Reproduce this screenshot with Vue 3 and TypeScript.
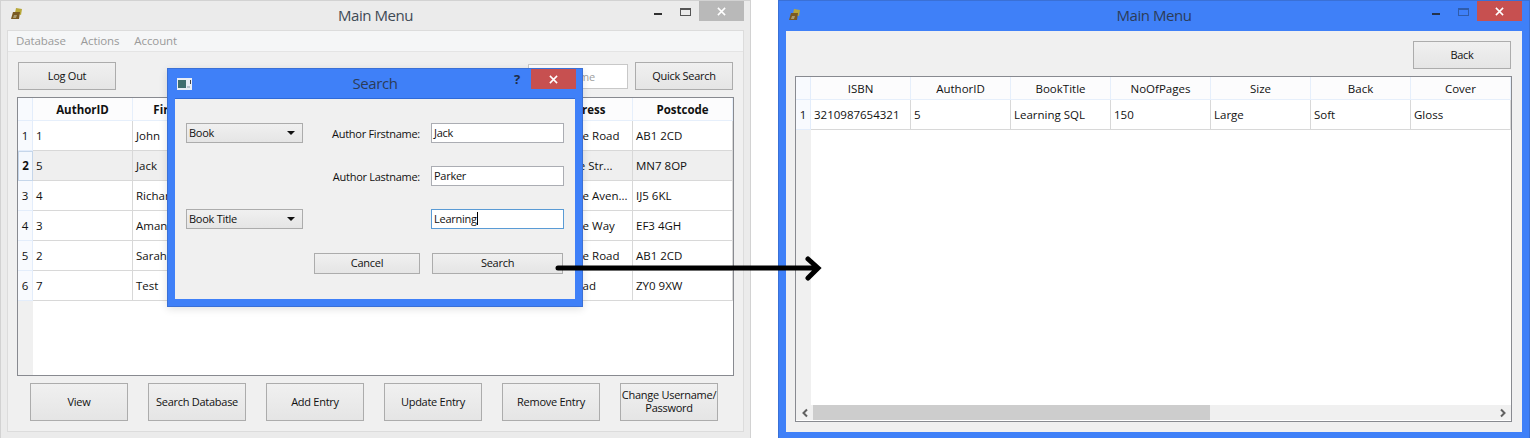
<script setup lang="ts">
interface Sheet {
  heads: string[]
  rows: string[][]
}
const mainSheet: Sheet = {
  heads: ['AuthorID', 'Firstname', '', '', '', 'Address', 'Postcode'],
  rows: [
    ['1', 'John', '', '', '', '123 Some Road', 'AB1 2CD'],
    ['5', 'Jack', '', '', '', '45 Maple Str...', 'MN7 8OP'],
    ['4', 'Richard', '', '', '', '789 Some Aven...', 'IJ5 6KL'],
    ['3', 'Amanda', '', '', '', '123 Some Way', 'EF3 4GH'],
    ['2', 'Sarah', '', '', '', '123 Some Road', 'AB1 2CD'],
    ['7', 'Test', '', '', '', '1 Elm Road', 'ZY0 9XW'],
  ],
}
const resultSheet: Sheet = {
  heads: ['ISBN', 'AuthorID', 'BookTitle', 'NoOfPages', 'Size', 'Back', 'Cover'],
  rows: [['3210987654321', '5', 'Learning SQL', '150', 'Large', 'Soft', 'Gloss']],
}
const actions = ['View', 'Search Database', 'Add Entry', 'Update Entry', 'Remove Entry', 'Change Username/\nPassword']
const menus = ['Database', 'Actions', 'Account']
</script>

<template>
  <div class="desk">
    <!-- Main window -->
    <section class="win win-main">
      <header class="bar">
        <svg class="app-icon" viewBox="0 0 14 14" width="14" height="14">
          <path d="M6 1 L12 2 L11 8 L5 6 Z" fill="#b8a83a" />
          <path d="M3 5 L10 5 L9 12 L1 12 Z" fill="#7a5a22" />
          <path d="M4 8 L7 8 L6 11 L3 11 Z" fill="#a89a70" />
        </svg>
        <h1 class="title">Main Menu</h1>
        <div class="ctrls">
          <i class="min"></i><i class="max"></i>
          <span class="close idle"><svg viewBox="0 0 10 10" width="9" height="9"><path d="M1 1 L9 9 M9 1 L1 9" stroke="#fff" stroke-width="1.7" /></svg></span>
        </div>
      </header>
      <div class="client">
        <nav class="menu"><span v-for="m in menus" :key="m">{{ m }}</span></nav>
        <div class="body">
          <div class="toolbar">
            <button class="btn tool">Log Out</button>
            <input class="quick" placeholder="Search name" />
            <button class="btn tool">Quick Search</button>
          </div>
          <div class="table main-table">
            <div class="row head strong">
              <div class="rh"></div>
              <div v-for="(h, i) in mainSheet.heads" :key="i" class="hc">{{ h }}</div>
            </div>
            <div v-for="(r, ri) in mainSheet.rows" :key="ri" class="row" :class="{ sel: ri === 1 }">
              <div class="rh">{{ ri + 1 }}</div>
              <div v-for="(c, ci) in r" :key="ci" class="cell">{{ c }}</div>
            </div>
            <div class="filler"><div class="gutter"></div></div>
          </div>
          <div class="actions">
            <button v-for="a in actions" :key="a" class="btn action">{{ a }}</button>
          </div>
        </div>
      </div>
    </section>

    <!-- Search dialog -->
    <section class="win dialog">
      <header class="bar">
        <svg class="dlg-icon" viewBox="0 0 15 12" width="15" height="12">
          <rect width="15" height="12" fill="#e8eef6" />
          <rect x="1" y="2" width="8" height="8" fill="#3f6f70" />
          <rect x="10" y="8" width="3" height="2" fill="#b9c4d0" />
          <rect x="13" y="2" width="1" height="4" fill="#444" />
        </svg>
        <h2 class="title">Search</h2>
        <div class="ctrls">
          <b class="help">?</b>
          <span class="close"><svg viewBox="0 0 10 10" width="9" height="9"><path d="M1 1 L9 9 M9 1 L1 9" stroke="#fff" stroke-width="1.7" /></svg></span>
        </div>
      </header>
      <div class="dlg-client">
        <div class="form">
          <div class="combo">Book<i></i></div>
          <label>Author Firstname:</label>
          <div class="field">Jack</div>
          <div></div>
          <label>Author Lastname:</label>
          <div class="field">Parker</div>
          <div class="combo">Book Title<i></i></div>
          <div></div>
          <div class="field focus">Learning<u></u></div>
        </div>
        <div class="dlg-actions">
          <button class="btn cancel">Cancel</button>
          <button class="btn go">Search</button>
        </div>
      </div>
    </section>

    <!-- Result window -->
    <section class="win win-result">
      <header class="bar">
        <svg class="app-icon" viewBox="0 0 14 14" width="14" height="14">
          <path d="M6 1 L12 2 L11 8 L5 6 Z" fill="#b8a83a" />
          <path d="M3 5 L10 5 L9 12 L1 12 Z" fill="#7a5a22" />
          <path d="M4 8 L7 8 L6 11 L3 11 Z" fill="#a89a70" />
        </svg>
        <h1 class="title">Main Menu</h1>
        <div class="ctrls">
          <i class="min"></i><i class="max"></i>
          <span class="close"><svg viewBox="0 0 10 10" width="9" height="9"><path d="M1 1 L9 9 M9 1 L1 9" stroke="#fff" stroke-width="1.7" /></svg></span>
        </div>
      </header>
      <div class="client result-client">
        <div class="back-row"><button class="btn tool">Back</button></div>
        <div class="table result-table">
          <div class="row head">
            <div class="rh"></div>
            <div v-for="h in resultSheet.heads" :key="h" class="hc">{{ h }}</div>
          </div>
          <div v-for="(r, ri) in resultSheet.rows" :key="ri" class="row">
            <div class="rh">{{ ri + 1 }}</div>
            <div v-for="(c, ci) in r" :key="ci" class="cell">{{ c }}</div>
          </div>
          <div class="filler"><div class="gutter"></div></div>
          <div class="scroll">
            <span class="arrow"><svg viewBox="0 0 8 10" width="8" height="10"><path d="M6 1.5 L2.5 5 L6 8.5" fill="none" stroke="#606060" stroke-width="2" /></svg></span>
            <div class="thumb"></div>
            <span class="arrow end"><svg viewBox="0 0 8 10" width="8" height="10"><path d="M2 1.5 L5.5 5 L2 8.5" fill="none" stroke="#606060" stroke-width="2" /></svg></span>
          </div>
        </div>
      </div>
    </section>

    <!-- Callout arrow -->
    <svg class="callout" width="270" height="30" viewBox="0 0 270 30">
      <path d="M3 15 H262 M253 6 L263 15 L253 25" fill="none" stroke="#000" stroke-width="5" stroke-linecap="round" stroke-linejoin="miter" />
    </svg>
  </div>
</template>

<style scoped>
.desk {
  position: relative;
  width: 1530px;
  height: 438px;
  overflow: hidden;
  background: #fff;
  font-family: "Open Sans", "Noto Sans", sans-serif;
  font-size: 11px;
  letter-spacing: -0.27px;
  color: #111;
}
.win {
  position: absolute;
  box-sizing: border-box;
  display: flex;
  flex-direction: column;
}
.win-main {
  left: 0;
  top: 0;
  width: 751px;
  height: 438px;
  background: #ebebeb;
  border: 1px solid #d2d2d2;
  border-bottom: 0;
}
.win-result {
  left: 778px;
  top: 0;
  width: 752px;
  height: 438px;
  background: #3f80f8;
  border: 1px solid #3a70d6;
  border-bottom: 0;
}
.dialog {
  left: 167px;
  top: 68px;
  width: 416px;
  height: 239px;
  background: #3f80f8;
  border: 1px solid #3a70d6;
  box-shadow: 0 2px 8px rgba(0, 0, 0, 0.12);
}
.bar {
  flex: none;
  display: grid;
  grid-template-columns: 1fr auto 1fr;
  align-items: center;
  height: 29px;
}
.win-result .bar { height: 30px; }
.title {
  margin: 0;
  padding-bottom: 2px;
  font-size: 15px;
  font-weight: 400;
  letter-spacing: -0.45px;
  color: #3f4a55;
}
.win-result .title, .dialog .title { color: #2c3c58; }
.app-icon { margin-left: 9px; margin-top: -3px; }
.dlg-icon { margin-left: 9px; }
.ctrls {
  justify-self: end;
  align-self: start;
  display: flex;
  align-items: flex-start;
  height: 20px;
  margin-right: 6px;
}
.win-result .ctrls { margin-right: 7px; }
.min {
  width: 8px;
  height: 2px;
  margin-top: 12px;
  background: #303030;
}
.max {
  box-sizing: border-box;
  width: 11px;
  height: 8px;
  margin: 7px 8px 0 18px;
  border: 1px solid #555;
  border-top-width: 2px;
}
.win-result .min { background: #24324c; margin-top: 12px; }
.win-result .max { border-color: #2f5cab; }
.close {
  display: flex;
  align-items: center;
  justify-content: center;
  width: 45px;
  height: 20px;
  background: #c75050;
}
.close.idle { background: #b9b9b9; }
.help {
  margin: 1px 11px 0 0;
  font-size: 13px;
  color: #1e2c45;
}
.dialog .ctrls { margin-right: 6px; }
.client {
  flex: 1;
  display: flex;
  flex-direction: column;
  margin: 0 6px 6px;
  background: #f0f0f0;
  border: 1px solid #dcdcdc;
}
.menu {
  flex: none;
  box-sizing: border-box;
  display: flex;
  gap: 15px;
  height: 21px;
  padding: 0 0 2px 8px;
  align-items: center;
  background: #f5f6f7;
  border-bottom: 1px solid #e4e4e4;
  color: #9a9a9a;
  font-size: 11.5px;
  letter-spacing: -0.1px;
}
.body {
  flex: 1;
  display: flex;
  flex-direction: column;
  padding: 10px 9px 0;
}
.toolbar {
  display: flex;
  align-items: center;
  height: 28px;
  padding: 0 1px;
}
.btn {
  box-sizing: border-box;
  padding: 0 0 2px;
  font: inherit;
  letter-spacing: inherit;
  color: #111;
  background: linear-gradient(#f0f0f0, #e5e5e5);
  border: 1px solid #acacac;
}
.tool { width: 98px; height: 28px; }
.quick {
  box-sizing: border-box;
  width: 100px;
  height: 25px;
  margin-left: auto;
  margin-right: 7px;
  padding: 0 2px;
  font: inherit;
  letter-spacing: inherit;
  background: #fff;
  border: 1px solid #c8c8c8;
  outline: 0;
}
.quick::placeholder { color: #a0a0a0; opacity: 1; }
.table {
  box-sizing: border-box;
  display: flex;
  flex-direction: column;
  width: 717px;
  background: #fff;
  border: 1px solid #888a90;
}
.main-table { height: 279px; margin-top: 7px; }
.result-table { height: 346px; margin-top: 7px; }
.row {
  flex: none;
  display: grid;
  grid-template-columns: 15px repeat(7, 100px);
  height: 30px;
  font-size: 11.5px;
  letter-spacing: 0;
}
.row > * {
  box-sizing: border-box;
  display: flex;
  align-items: center;
  padding-bottom: 1px;
  overflow: hidden;
  white-space: nowrap;
}
.rh {
  justify-content: center;
  background: #f8fafe;
  border-right: 1px solid #e3edfb;
  border-bottom: 1px solid #e3edfb;
}
.head { height: 23px; }
.head.strong { font-weight: 700; }
.row.head > * { padding-bottom: 0; }
.hc {
  justify-content: center;
  background: #fcfcfd;
  border-right: 1px solid #e6effb;
  border-bottom: 1px solid #e6effb;
}
.cell {
  padding-left: 3px;
  border-right: 1px solid #d8d8d8;
  border-bottom: 1px solid #d8d8d8;
}
.sel .cell { background: #efefef; }
.sel .rh {
  font-weight: 700;
  background: #f4f8fd;
  border: 1px solid #c5d6ea;
}
.filler { flex: 1; display: flex; }
.gutter { width: 15px; background: #f0f0f0; }
.actions {
  display: flex;
  gap: 20px;
  margin-top: 7px;
  padding-left: 13px;
}
.action { width: 98px; height: 38px; line-height: 13px; white-space: pre-line; }
.dlg-client {
  flex: 1;
  box-sizing: border-box;
  margin: 0 7px 7px;
  padding: 24px 0 0 11px;
  background: #f0f0f0;
  border-top: 1px solid #2f6ad8;
}
.dialog .bar { height: 29px; }
.form {
  display: grid;
  grid-template-columns: 117px 128px 133px;
  grid-auto-rows: 20px;
  row-gap: 23px;
  align-items: center;
}
.form label { text-align: right; padding-right: 11px; }
.combo {
  box-sizing: border-box;
  display: flex;
  align-items: center;
  justify-content: space-between;
  height: 20px;
  padding: 0 7px 2px 2px;
  background: linear-gradient(#f0f0f0, #e5e5e5);
  border: 1px solid #acacac;
}
.combo i {
  width: 0;
  height: 0;
  margin-top: 2px;
  border-left: 4px solid transparent;
  border-right: 4px solid transparent;
  border-top: 4px solid #111;
}
.field {
  box-sizing: border-box;
  display: flex;
  align-items: center;
  height: 20px;
  padding: 0 0 1px 2px;
  background: #fff;
  border: 1px solid #abadb3;
}
.field.focus { border-color: #5a9bd5; }
.field u {
  width: 1px;
  height: 13px;
  background: #000;
}
.dlg-actions {
  display: flex;
  gap: 12px;
  margin: 24px 0 0 128px;
}
.cancel { width: 106px; height: 21px; }
.go { width: 131px; height: 21px; }
.result-client {
  margin: 0 7px 6px;
  padding: 10px 9px 0;
  border: 0;
}
.back-row { display: flex; justify-content: flex-end; padding-right: 2px; }
.scroll {
  flex: none;
  display: flex;
  height: 15px;
  margin-bottom: 1px;
  background: #f0f0f0;
}
.arrow {
  display: flex;
  align-items: center;
  justify-content: center;
  width: 17px;
}
.arrow.end { margin-left: auto; }
.thumb { width: 397px; background: #cdcdcd; }
.callout {
  position: absolute;
  left: 555px;
  top: 253px;
}
</style>
